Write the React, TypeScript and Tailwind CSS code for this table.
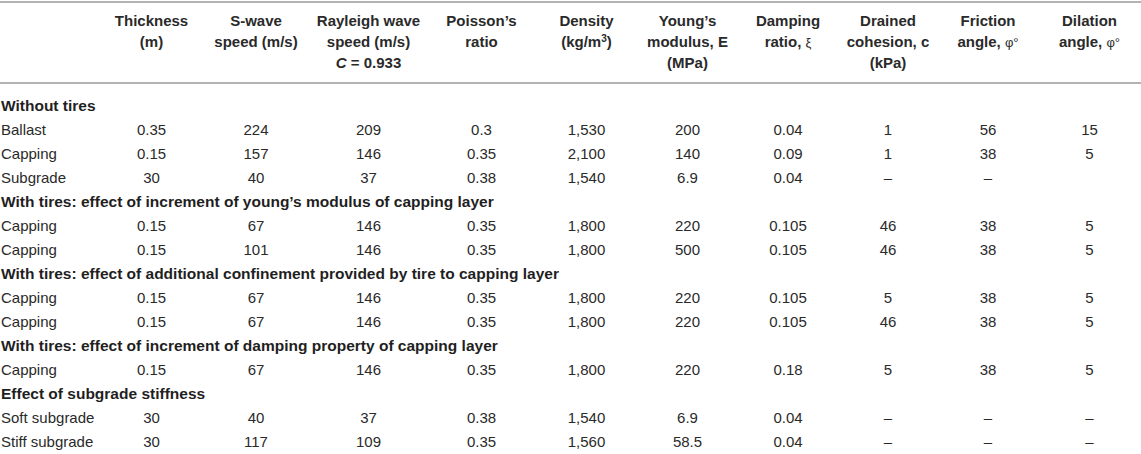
type Row = { section: string } | { cells: string[] };

const rows: Row[] = [
  { section: "Without tires" },
  { cells: ["Ballast", "0.35", "224", "209", "0.3", "1,530", "200", "0.04", "1", "56", "15"] },
  { cells: ["Capping", "0.15", "157", "146", "0.35", "2,100", "140", "0.09", "1", "38", "5"] },
  { cells: ["Subgrade", "30", "40", "37", "0.38", "1,540", "6.9", "0.04", "–", "–", ""] },
  { section: "With tires: effect of increment of young’s modulus of capping layer" },
  { cells: ["Capping", "0.15", "67", "146", "0.35", "1,800", "220", "0.105", "46", "38", "5"] },
  { cells: ["Capping", "0.15", "101", "146", "0.35", "1,800", "500", "0.105", "46", "38", "5"] },
  { section: "With tires: effect of additional confinement provided by tire to capping layer" },
  { cells: ["Capping", "0.15", "67", "146", "0.35", "1,800", "220", "0.105", "5", "38", "5"] },
  { cells: ["Capping", "0.15", "67", "146", "0.35", "1,800", "220", "0.105", "46", "38", "5"] },
  { section: "With tires: effect of increment of damping property of capping layer" },
  { cells: ["Capping", "0.15", "67", "146", "0.35", "1,800", "220", "0.18", "5", "38", "5"] },
  { section: "Effect of subgrade stiffness" },
  { cells: ["Soft subgrade", "30", "40", "37", "0.38", "1,540", "6.9", "0.04", "–", "–", "–"] },
  { cells: ["Stiff subgrade", "30", "117", "109", "0.35", "1,560", "58.5", "0.04", "–", "–", "–"] },
];

function Th({ children }: { children?: React.ReactNode }) {
  return (
    <th className="border-b-2 border-solid border-[#b3b3b3] pt-[7px] pb-[9px] px-0 align-top text-center font-bold text-[15px] leading-[21px] whitespace-nowrap">
      {children}
    </th>
  );
}

export default function App() {
  return (
    <div
      className="w-[1141px] h-[454px] overflow-hidden bg-white pt-px text-[#2a2a2a]"
      style={{ fontFamily: '"Liberation Sans", Arial, sans-serif' }}
    >
      <div className="border-t-2 border-solid border-[#b3b3b3]">
        <table className="w-[1141px] table-fixed border-separate border-spacing-0">
          <colgroup>
            <col className="w-[101px]" />
            <col className="w-[101px]" />
            <col className="w-[108px]" />
            <col className="w-[117px]" />
            <col className="w-[109px]" />
            <col className="w-[101px]" />
            <col className="w-[101px]" />
            <col className="w-[100px]" />
            <col className="w-[100px]" />
            <col className="w-[100px]" />
            <col className="w-[103px]" />
          </colgroup>
          <thead>
            <tr>
              <Th />
              <Th>
                Thickness
                <br />
                (m)
              </Th>
              <Th>
                S-wave
                <br />
                speed (m/s)
              </Th>
              <Th>
                Rayleigh wave
                <br />
                speed (m/s)
                <br />
                <i>C</i> = 0.933
              </Th>
              <Th>
                Poisson’s
                <br />
                ratio
              </Th>
              <Th>
                Density
                <br />
                (kg/m<sup className="text-[10px]">3</sup>)
              </Th>
              <Th>
                Young’s
                <br />
                modulus, E
                <br />
                (MPa)
              </Th>
              <Th>
                Damping
                <br />
                ratio, <span className="font-normal text-[13px]">ξ</span>
              </Th>
              <Th>
                Drained
                <br />
                cohesion, c
                <br />
                (kPa)
              </Th>
              <Th>
                Friction
                <br />
                angle, <span className="font-normal text-[13px]">φ°</span>
              </Th>
              <Th>
                Dilation
                <br />
                angle, <span className="font-normal text-[13px]">φ°</span>
              </Th>
            </tr>
          </thead>
          <tbody>
            {rows.map((row, i) => {
              const pad = i === 0 ? "pt-[10px]" : "pt-0";
              if ("section" in row) {
                return (
                  <tr key={i}>
                    <td
                      colSpan={11}
                      className={`${pad} pl-px h-[24px] text-left font-bold text-[15.5px] leading-[24px] whitespace-nowrap text-[#1f1f1f]`}
                    >
                      {row.section}
                    </td>
                  </tr>
                );
              }
              return (
                <tr key={i}>
                  {row.cells.map((c, j) => (
                    <td
                      key={j}
                      className={
                        j === 0
                          ? "pl-px text-left text-[15px] leading-[24px] whitespace-nowrap"
                          : "text-center text-[15px] leading-[24px] whitespace-nowrap"
                      }
                    >
                      {c}
                    </td>
                  ))}
                </tr>
              );
            })}
          </tbody>
        </table>
      </div>
    </div>
  );
}
